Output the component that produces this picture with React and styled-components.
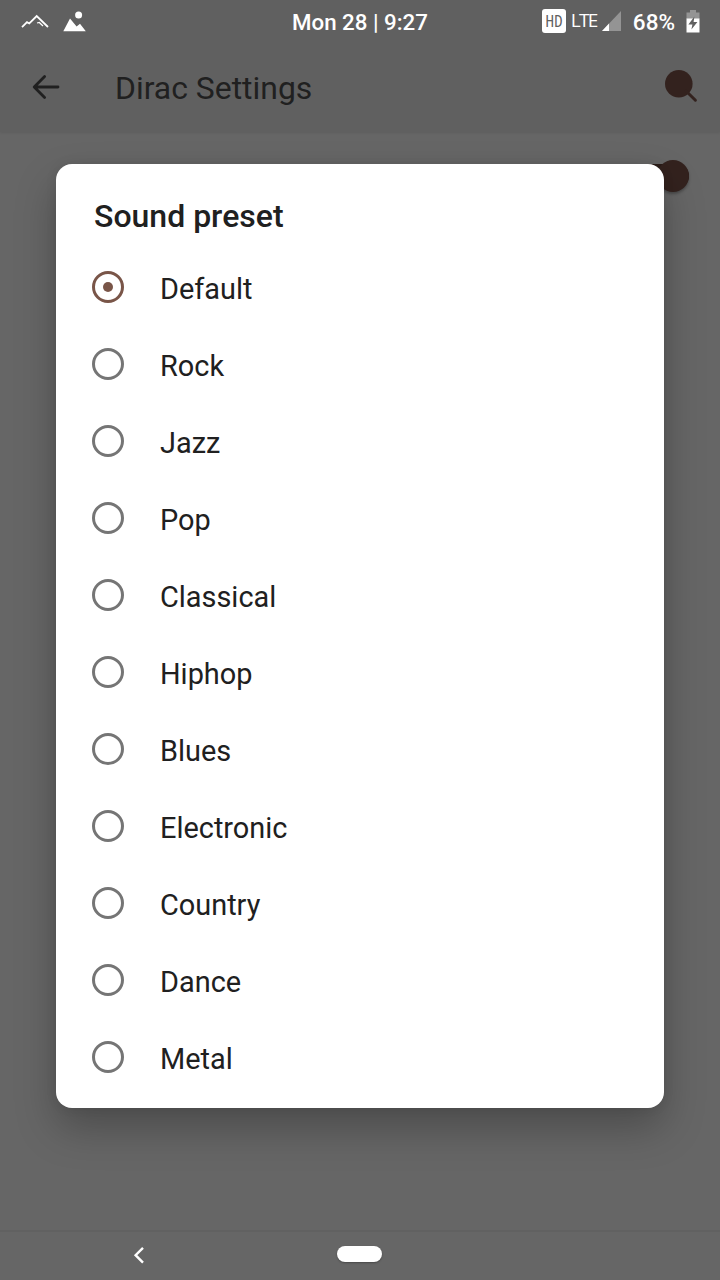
import React, { useState } from 'react'
import styled, { createGlobalStyle } from 'styled-components'

const presets = [
  'Default',
  'Rock',
  'Jazz',
  'Pop',
  'Classical',
  'Hiphop',
  'Blues',
  'Electronic',
  'Country',
  'Dance',
  'Metal',
]

const App = () => {
  const [selected, setSelected] = useState('Default')

  return (
    <Screen>
      <GlobalStyle />

      <Header>
        <StatusBar>
          <Notifications>
            <svg width="28" height="16" viewBox="0 0 28 16" fill="none">
              <path
                d="M1 13.2L6 8.2L8.3 9.5L15.7 2L27 13"
                stroke="#fff"
                strokeWidth="1.8"
              />
              <path
                d="M16 9L18.3 8.5L22 12"
                stroke="#fff"
                strokeWidth="1.2"
              />
            </svg>
            <svg width="24" height="22" viewBox="0 0 24 22" fill="#fff">
              <circle cx="15.6" cy="3.9" r="3.5" />
              <path d="M0.3 20.3L7 7.4L13.6 15.5L17 12.7L22.8 20.3Z" />
            </svg>
          </Notifications>
          <Clock>Mon 28 | 9:27</Clock>
          <Indicators>
            <HdBadge>HD</HdBadge>
            <Network>LTE</Network>
            <Signal width="19" height="20" viewBox="0 0 19 20">
              <path d="M19 0V20H0Z" fill="#949494" />
              <path d="M7 12.6V20H0Z" fill="#fff" />
            </Signal>
            <Percent>68%</Percent>
            <Battery width="14" height="23" viewBox="0 0 14 23">
              <path d="M4 0H10V2.5H13.5V9H0.5V2.5H4Z" fill="#949494" />
              <path d="M0.5 8.5H13.5V22.5H0.5Z" fill="#fff" />
              <path d="M8.4 6.6L2.4 14.4H6.4L5.4 19.6L11.4 12H7.6Z" fill="#606060" />
            </Battery>
          </Indicators>
        </StatusBar>

        <Toolbar>
          <svg width="28" height="26" viewBox="0 0 28 26" fill="none">
            <path
              d="M26 13H2.5M12.6 2.6L2.2 13L12.6 23.4"
              stroke="#202020"
              strokeWidth="2.8"
              strokeLinecap="round"
              strokeLinejoin="round"
            />
          </svg>
          <PageTitle>Dirac Settings</PageTitle>
          <SearchIcon width="34" height="34" viewBox="0 0 34 34">
            <circle cx="14.8" cy="14.7" r="13.8" fill="#33221e" />
            <path
              d="M22 22L31.4 31.2"
              stroke="#33221e"
              strokeWidth="3"
              strokeLinecap="round"
            />
          </SearchIcon>
        </Toolbar>
      </Header>

      <Content>
        <Switch>
          <Thumb />
        </Switch>
      </Content>

      <NavBar>
        <BackButton width="12" height="18" viewBox="0 0 12 18" fill="none">
          <path d="M10 1.8L2.6 9.2L10 16.6" stroke="#fff" strokeWidth="2.4" />
        </BackButton>
        <HomePill />
      </NavBar>

      <Dialog>
        <DialogTitle>Sound preset</DialogTitle>
        {presets.map(name => (
          <Option key={name} onClick={() => setSelected(name)}>
            <Radio $checked={name === selected} />
            <Label>{name}</Label>
          </Option>
        ))}
      </Dialog>
    </Screen>
  )
}

const GlobalStyle = createGlobalStyle`
  * {
    box-sizing: border-box;
  }

  body {
    margin: 0;
    background: #666;
    font-family: Roboto, sans-serif;
  }
`
const Screen = styled.div`
  width: 720px;
  height: 1280px;
  position: relative;
  overflow: hidden;

  display: flex;
  flex-direction: column;
  background: #666;
`
const Header = styled.header`
  height: 132px;
  background: #606060;
  box-shadow: 0 1px 2px rgba(0, 0, 0, 0.08);
`
const StatusBar = styled.div`
  height: 44px;
  padding: 0 20px 0 21px;

  display: grid;
  grid-template-columns: 1fr auto 1fr;
  align-items: center;
  color: #fff;
`
const Notifications = styled.div`
  display: flex;
  align-items: center;
  gap: 14px;
`
const Clock = styled.span`
  margin-right: 1px;
  font-size: 22.3px;
  font-weight: 500;
  white-space: pre;
`
const Indicators = styled.div`
  display: flex;
  align-items: center;
  justify-content: flex-end;
`
const HdBadge = styled.span`
  width: 24px;
  height: 24px;
  margin: 0 5px 3px 0;
  border-radius: 3px;
  background: #fff;
  color: #606060;

  font: 400 17px/24px 'Open Sans', sans-serif;
  font-stretch: 80%;
  letter-spacing: -0.2px;
  text-align: center;
`
const Network = styled.span`
  width: 26px;
  margin: 0 5px 5px 0;
  font: 400 19px/24px 'Open Sans', sans-serif;
  font-stretch: 88%;
  letter-spacing: -1.7px;
`
const Signal = styled.svg`
  margin: 0 12px 3px 0;
`
const Percent = styled.span`
  margin-right: 11px;
  font-size: 22.5px;
  font-weight: 500;
`
const Battery = styled.svg`
  margin-bottom: 2px;
`
const Toolbar = styled.div`
  height: 86px;
  padding: 0 22px 0 32px;

  display: flex;
  align-items: center;
`
const PageTitle = styled.h1`
  flex: 1;
  margin: 2px 0 0 55px;
  font-size: 31.9px;
  font-weight: 400;
  line-height: 38px;
  color: #202020;
`
const SearchIcon = styled.svg`
  margin-bottom: 2px;
`
const Content = styled.main`
  flex: 1;
  padding: 28px 31px;

  display: flex;
  justify-content: flex-end;
  align-items: flex-start;
`
const Switch = styled.div`
  width: 54px;
  height: 24px;
  margin-top: 4px;
  border-radius: 12px;
  background: #2b1d19;

  display: flex;
  align-items: center;
  justify-content: flex-end;
`
const Thumb = styled.div`
  flex: none;
  width: 32px;
  height: 32px;
  border-radius: 50%;
  background: #33221e;
  box-shadow: 0 2px 3px rgba(0, 0, 0, 0.3);
`
const NavBar = styled.nav`
  height: 50px;
  padding: 0 134px 4px 133px;
  border-top: 2px solid #616161;

  display: grid;
  grid-template-columns: 1fr auto 1fr;
  align-items: center;
`
const BackButton = styled.svg`
  margin-top: 2px;
`
const HomePill = styled.div`
  width: 45px;
  height: 16px;
  border-radius: 8px;
  background: #fff;
  box-shadow: 0 1px 2px rgba(0, 0, 0, 0.3);
`
const Dialog = styled.section`
  position: absolute;
  top: 164px;
  left: 56px;
  width: 608px;
  height: 944px;
  padding: 32px 36px 0;
  border-radius: 16px;
  background: #fff;
  color: #202020;
  box-shadow: 0 20px 40px rgba(0, 0, 0, 0.26), 0 0 12px rgba(0, 0, 0, 0.08);
`
const DialogTitle = styled.h2`
  margin: 0 0 14px 2px;
  font-size: 32px;
  font-weight: 500;
  line-height: 40px;
`
const Option = styled.div`
  height: 77px;

  display: flex;
  align-items: center;
  cursor: pointer;
`
const Radio = styled.span`
  width: 32px;
  height: 32px;
  margin-bottom: 3px;
  border: 3px solid ${props => (props.$checked ? '#795548' : '#757575')};
  border-radius: 50%;

  display: grid;
  place-items: center;

  &::after {
    content: '';
    width: 10px;
    height: 10px;
    border-radius: 50%;
    background: ${props => (props.$checked ? '#795548' : 'transparent')};
  }
`
const Label = styled.span`
  margin-left: 36px;
  font-size: 28.9px;
  line-height: 36px;
`

export default App
